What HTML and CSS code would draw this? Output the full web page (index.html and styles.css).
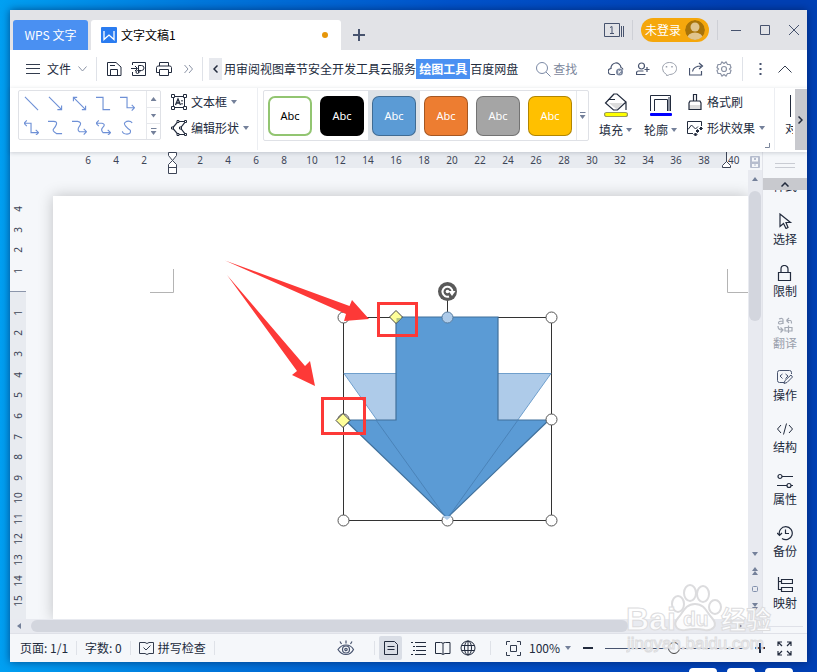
FILE: index.html
```html
<!DOCTYPE html>
<html lang="zh-CN">
<head>
    <meta charset="UTF-8">
    <meta name="viewport" content="width=device-width, initial-scale=1.0">
    <title>文字文稿1 - WPS 文字</title>
    <link rel="stylesheet" href="styles.css">
</head>
<body>
<div class="window">
    <header class="titlebar">
        <button class="home-tab">WPS 文字</button>
        <div class="doc-tab">
            <svg width="16" height="16"><rect width="16" height="16" rx="1" fill="#2b7cf0"/><path d="M3 4v8.500l5-4.500 5 4.500v-8.500" fill="none" stroke="#fff" stroke-width="1.300"/></svg>
            <span>文字文稿1</span>
            <i class="unsaved"></i>
        </div>
        <button class="new-tab" aria-label="新建"><svg width="12" height="12"><path d="M6 0v12M0 6h12" stroke="#47536e" stroke-width="2"/></svg></button>
        <div class="window-tools">
            <button aria-label="窗口列表"><svg width="20" height="14" fill="none" stroke="#47536e"><path d="M.5.500h15v13H.5zM17.500 3v11M19.500 3v11M6 4.500l2-1V10.500M6 10.500h4"/></svg></button>
            <i class="sep"></i>
            <button class="login">未登录
                <svg width="20" height="20"><defs><clipPath id="face"><circle cx="10" cy="10" r="10"/></clipPath></defs><g clip-path="url(#face)"><circle cx="10" cy="10" r="10" fill="#a87308"/><circle cx="10" cy="7" r="4.500" fill="#e0c48e"/><ellipse cx="10" cy="18.500" rx="8" ry="6" fill="#e0c48e"/></g></svg>
            </button>
            <i class="sep"></i>
            <button class="win" aria-label="最小化"><svg width="10" height="10"><path d="M0 5.500h10" stroke="#47536e"/></svg></button>
            <button class="win" aria-label="最大化"><svg width="10" height="10"><path d="M.5.500h9v9h-9z" fill="none" stroke="#47536e"/></svg></button>
            <button class="win" aria-label="关闭"><svg width="10" height="10"><path d="M0 0l10 10M10 0L0 10" stroke="#47536e"/></svg></button>
        </div>
    </header>

    <div class="menubar">
        <button class="file-menu">
            <svg width="14" height="12" stroke="#333c4e"><path d="M0 1.500h14M0 5.500h14M0 10.500h14"/></svg>
            文件
            <svg width="9" height="6" fill="none" stroke="#8b93a5"><path d="M.5.500l4 4.500 4-4.500"/></svg>
        </button>
        <i class="sep"></i>
        <div class="quick">
            <button aria-label="保存"><svg width="16" height="16" fill="none" stroke="#222b3d"><path d="M1.500 14.500V1.500h8.500l5 4.500v8.500zM4.500 14.500v-6h7v6M4 4.500h5"/></svg></button>
            <button aria-label="输出为PDF"><svg width="16" height="16" fill="none" stroke="#222b3d"><path d="M1.500 4V1.500h13v13h-13V11M0 7.500h6M4 5L6.500 7.500 4 10M7.500 12V4.500h3a2.500 2.500 0 0 1 0 5H6.500a1.500 1.500 0 0 0 0 3q2-.5 3-3"/></svg></button>
            <button aria-label="打印"><svg width="16" height="16" fill="none" stroke="#222b3d"><path d="M3.500 5V1.500h9V5M3.500 11.500h-3V6.500l1-1.500h13l1 1.500v5h-3M3.500 8.500h9v6h-9z"/></svg></button>
            <button aria-label="更多"><svg width="9" height="8" fill="none" stroke="#8b93a5"><path d="M.5 0l3.500 4-3.500 4M5 0l3.500 4L5 8"/></svg></button>
        </div>
        <i class="sep"></i>
        <button class="scroll-left" aria-label="向左"><svg width="5" height="8" fill="none" stroke="#222b3d" stroke-width="1.500"><path d="M4.500.500L1 4l3.500 3.500"/></svg></button>
        <nav class="tabs">
            <a href="#">用</a><a href="#">审阅</a><a href="#">视图</a><a href="#">章节</a><a href="#">安全</a><a href="#">开发工具</a><a href="#">云服务</a><a href="#" class="active">绘图工具</a><a href="#">百度网盘</a>
        </nav>
        <button class="search"><svg width="15" height="15" fill="none" stroke="#7c8aa6"><circle cx="6" cy="6" r="5.500"/><path d="M10 10l4.500 4.500"/></svg>查找</button>
        <div class="menu-tools">
            <button aria-label="云同步"><svg width="16" height="14" fill="none" stroke="#47536e" stroke-width="1.200"><path d="M7 12.500H3.500a3 3 0 0 1-.5-6 5 5 0 0 1 10-1 3 3 0 0 1 2 2"/><circle cx="11.500" cy="10" r="3.500" fill="#7d89a0" stroke="none"/><path d="M10.200 8.700l2.600 2.600M12.800 8.700l-2.600 2.600" stroke="#fff"/></svg></button>
            <button aria-label="协作"><svg width="14" height="14" fill="none" stroke="#47536e" stroke-width="1.200"><circle cx="5.500" cy="4" r="3"/><path d="M9.500 12.500h-9V11q0-2 2-2h5M8.500 7.500h5M11 5v5"/></svg></button>
            <button aria-label="反馈"><svg width="15" height="14" fill="none" stroke="#9aa0ac"><path d="M4.500 12.500Q.5 10.500.5 6.500C.5 3 3.500.500 7.500.500s7 2.500 7 6-3 6-7 6q-1 1-3 1z"/><path d="M4.500 4v1.500M10 4v1.500" stroke-width="1.500"/></svg></button>
            <button aria-label="分享"><svg width="15" height="14" fill="none" stroke="#47536e" stroke-width="1.200"><path d="M.5 6v7h12V9M3.500 9.500q1-5.500 9-5.500M10 1l3.500 3L10 7"/></svg></button>
            <button aria-label="设置"><svg width="16" height="16" fill="none" stroke="#8b93a5" stroke-width="1.200"><path d="M6 1l2 1.500L10 1l1.500 2.500H14l1 3L13.500 8 15 9.500l-1 3h-2.500L10 15l-2-1.500L6 15l-1.500-2.500H2l-1-3L2.500 8 1 6.500l1-3h2.500z"/><circle cx="8" cy="8" r="2.500"/></svg></button>
            <i class="sep"></i>
            <button aria-label="更多选项"><svg width="3" height="12" fill="#47536e"><path d="M.5 0h2v2h-2zM.5 5h2v2h-2zM.5 10h2v2h-2z"/></svg></button>
            <button class="fold" aria-label="收起功能区"><svg width="14" height="8" fill="none" stroke="#333c4e"><path d="M.5 7.500L7 1l6.500 6.500"/></svg></button>
        </div>
    </div>

    <div class="ribbon">
        <div class="shape-gallery">
            <div class="shapes">
                <button aria-label="直线"><svg viewBox="0 0 16 16"><path d="M1 1l14 14"/></svg></button>
                <button aria-label="箭头"><svg viewBox="0 0 16 16"><path d="M1 1l13 13M14.500 10v4.500H10"/></svg></button>
                <button aria-label="双箭头"><svg viewBox="0 0 16 16"><path d="M1.500 1.500l13 13M14.500 10.500v4h-4M1.500 5.500v-4h4"/></svg></button>
                <button aria-label="肘形连接符"><svg viewBox="0 0 16 16"><path d="M0 1.500h7.500v13H15"/></svg></button>
                <button aria-label="肘形箭头"><svg viewBox="0 0 16 16"><path d="M0 1.500h7.500v11H15M12.500 9.500l3 3-3 3"/></svg></button>
                <button aria-label="肘形双箭头"><svg viewBox="0 0 16 16"><path d="M.5 3.500h7v10H15M12.500 10.500l3 3-3 3M3 .5l-3 3 3 3"/></svg></button>
                <button aria-label="曲线连接符"><svg viewBox="0 0 16 16"><path d="M0 1.500h6q4 0 3 3t-3 5 3 5h6"/></svg></button>
                <button aria-label="曲线箭头"><svg viewBox="0 0 16 16"><path d="M0 1.500h6q5 1 2 5t0 6h7M12.500 9.500l3 3-3 3"/></svg></button>
                <button aria-label="曲线双箭头"><svg viewBox="0 0 16 16"><path d="M.5 3.500h6q4 1 1 4t0 6H15M12.500 10.500l3 3-3 3M3 .5l-3 3 3 3"/></svg></button>
                <button aria-label="曲线"><svg viewBox="0 0 16 16"><path d="M13 3Q11 .5 7 1.500 3 3 6 6.500t5 4.500q1 4-3.500 4T2.500 12"/></svg></button>
            </div>
            <div class="spin">
                <button aria-label="上一行"><i class="up"></i></button>
                <button aria-label="下一行"><i class="down"></i></button>
                <button aria-label="展开"><i class="down bar"></i></button>
            </div>
        </div>

        <div class="tool-stack">
            <button><svg width="16" height="16" fill="none" stroke="#222b3d"><path d="M2.500 1v14M13.500 1v14M1 2.500h14M1 13.500h14"/><path d="M.5.500h3v3h-3zM12.500.500h3v3h-3zM.5 12.500h3v3h-3zM12.500 12.500h3v3h-3z" fill="#fff"/><path d="M4.500 11L7 5l2.500 6M5.500 9h3M11 6v1.500M11 9v1.500" stroke-width="1.300"/></svg>文本框<i class="down"></i></button>
            <button><svg width="16" height="16" fill="none" stroke="#222b3d" stroke-width="1.200"><path d="M1.500 8L7 1.500h7.500L9.500 8l5 6.500H7z"/><path d="M.5 7h2v2h-2zM6 .5h2v2H6zM13.500.500h2v2h-2zM8.500 7h2v2h-2zM6 13.500h2v2H6zM13.500 13.500h2v2h-2z" fill="#fff" stroke-width="1"/></svg>编辑形状<i class="down"></i></button>
        </div>
        <i class="sep"></i>

        <div class="style-gallery">
            <button class="swatch white"><span>Abc</span></button>
            <button class="swatch black"><span>Abc</span></button>
            <button class="swatch blue selected"><span>Abc</span></button>
            <button class="swatch orange"><span>Abc</span></button>
            <button class="swatch gray"><span>Abc</span></button>
            <button class="swatch gold"><span>Abc</span></button>
            <button class="more" aria-label="更多样式"><i class="down bar"></i></button>
        </div>

        <div class="paint">
            <button><svg width="24" height="24" fill="none" stroke="#222b3d" stroke-width="1.200"><path d="M5 10h14l-6 6.500z" fill="#dcdcdc" stroke="none"/><path d="M10 1L1.500 10l8 7h4L22 9 13 1z M4 6.500h7M22 9v8"/><rect x=".5" y="19.500" width="23" height="4" rx="2" fill="#ffff00" stroke="#99995e"/></svg><span>填充<i class="down"></i></span></button>
            <button><svg width="24" height="24" fill="none" stroke="#222b3d"><path d="M1.500 18V2.500h20V18" /><path d="M5.500 18V6.500h13V18"/><path d="M20 4v14" stroke="#8d939f" stroke-width="2"/><rect x="1" y="20" width="22" height="3" rx="1" fill="#0000ff" stroke="none"/></svg><span>轮廓<i class="down"></i></span></button>
        </div>

        <div class="tool-stack effects">
            <button><svg width="16" height="16" fill="none" stroke="#222b3d" stroke-width="1.200"><path d="M2 11h12v4.500H2z" fill="#ddd" stroke="none"/><path d="M6.500 7V.500h3V7M3 7h10l1 2v6.500H2V9z"/></svg>格式刷</button>
            <button><svg width="16" height="16" fill="none" stroke="#222b3d"><path d="M6 13.500H.5V1.500h14V6M1 9.500L4.500 5l4 4L11 6.500"/><path d="M9 11l1.500-1.500L12 11l-1.500 1.500zM12.500 8.500L14 7l1.500 1.500L14 10zM7 14.500L8.500 13l1.500 1.500L8.500 16z" fill="#222b3d"/></svg>形状效果<i class="down"></i></button>
        </div>
        <div class="launcher"><svg width="5" height="5" fill="none" stroke="#7c879c"><path d="M4.500 0v4.500H0"/></svg></div>
        <i class="sep"></i>
        <div class="align-group"><svg width="8" height="22"><path d="M5.500 0v22" stroke="#222b3d"/></svg><span>对齐</span></div>
        <button class="scroll-right" aria-label="向右"><svg width="5" height="8" fill="none" stroke="#222b3d" stroke-width="1.500"><path d="M.5.500L4 4 .5 7.500"/></svg></button>
    </div>

    <div class="workspace">
        <main class="editor">
            <div class="ruler-h">
                <span>6</span><span>4</span><span>2</span>
                <span class="marker"><svg width="10" height="22" fill="#fff" stroke="#3d4557"><path d="M.5.500h8v3l-4 5 4 4v9h-8v-9l4-4-4-5zM.5 15.500h8"/></svg></span>
                <span>2</span><span>4</span><span>6</span><span>8</span><span>10</span><span>12</span><span>14</span><span>16</span><span>18</span><span>20</span><span>22</span><span>24</span><span>26</span><span>28</span><span>30</span><span>32</span><span>34</span><span>36</span><span>38</span>
                <span class="last"><svg width="9" height="16" fill="#fff" stroke="#3d4557"><path d="M4.500 0v10M.5 15.500h8v-2l-4-4-4 4z"/></svg>40</span>
            </div>
            <div class="editor-body">
                <div class="ruler-v">
                    <span>4</span><span>3</span><span>2</span><span>1</span><span></span><span>1</span><span>2</span><span>3</span><span>4</span><span>5</span><span>6</span><span>7</span><span>8</span><span>9</span><span>10</span><span>11</span><span>12</span><span>13</span><span>14</span><span>15</span>
                </div>
                <div class="canvas">
                    <div class="page">
                        <svg width="695" height="424" viewBox="53 196 695 424">
                            <g fill="none" stroke="#b4b4b4"><path d="M150 292.500h23.500V269M748 292.500h-20.500V269"/></g>
                            <path d="M343.500 317.500h208v203h-208zM447.500 300v17" fill="none" stroke="#333"/>
                            <path d="M344 373.500h207L447 519z" fill="#aecbe9" stroke="#6f9fcc"/>
                            <g fill="#fff" stroke="#555">
                                <circle cx="343.500" cy="317.500" r="5.500"/><circle cx="551.500" cy="317.500" r="5.500"/>
                                <circle cx="343.500" cy="520.500" r="5.500"/><circle cx="447.500" cy="520.500" r="5.500"/><circle cx="551.500" cy="520.500" r="5.500"/>
                                <circle cx="343.500" cy="419.500" r="5.500"/>
                            </g>
                            <path d="M396 317h102v103h51L447 518 345 420h51z" fill="#5b9bd5" stroke="#41719c" stroke-width="1.200"/>
                            <path d="M376 420L447 519l71-99" fill="none" stroke="#4b83b8"/>
                            <circle cx="551.500" cy="419.500" r="5.500" fill="#fff" stroke="#555"/>
                            <circle cx="447.500" cy="317.500" r="5.500" fill="#aecbe9" stroke="#567ca0"/>
                            <path d="M442 516l5 4 5-4" fill="#aecbe9"/>
                            <path d="M396 310.500l6.500 6.500-6.500 6.500-6.500-6.500zM343 413.500l7 7-7 7-7-7z" fill="#ffff99" stroke="#444"/>
                            <path d="M396.500 322.500V318h5z" fill="#b5c982"/>
                            <circle cx="447.500" cy="291.500" r="9.500" fill="#595959"/>
                            <path d="M449 296.500a5 5 0 1 1 3.500-5" fill="none" stroke="#fff" stroke-width="2"/>
                            <path d="M448.500 291h7l-3.500 5z" fill="#fff"/><circle cx="447.500" cy="291.500" r="1.800" fill="#fff"/>
                            <g fill="none" stroke="#fd3937" stroke-width="3"><path d="M378.500 303.500h38v32h-38zM322.500 398.500h42v35h-42z"/></g>
                            <path d="M225 260.500L349.500 306l2.500-6 17 19-25 2 2-7zM227 275l78 91 5-5 5 25-23-11 5-4z" fill="#fd3937"/>
                        </svg>
                    </div>
                </div>
            </div>
            <div class="scroll-h"><i class="left"></i><div class="thumb"></div><i class="right"></i></div>
        </main>

        <div class="scroll-v">
            <button aria-label="标尺"><svg width="10" height="12"><rect width="10" height="12" rx="1" fill="#b6bdce"/><path d="M2 1.500h6v4H2zM2 8h6v3H2z" fill="#f5f7fa"/><path d="M4 2h2v2H4zM4.500 8h1v2h-1z" fill="#b6bdce"/></svg></button>
            <i class="up"></i>
            <div class="thumb"></div>
            <div class="jump">
                <i class="down"></i>
                <span><i class="up"></i><i class="up"></i></span>
                <svg width="6" height="6"><rect x=".5" y=".5" width="5" height="5" rx="1" fill="none" stroke="#8290ad"/></svg>
                <span><i class="down"></i><i class="down"></i></span>
            </div>
        </div>

        <aside class="side">
            <div class="grip"></div>
            <button class="side-up" aria-label="向上"><svg width="8" height="5" fill="none" stroke="#222b3d" stroke-width="1.500"><path d="M.5 4.500L4 1l3.500 3.500"/></svg></button>
            <div class="side-cut"><span>样式</span></div>
            <button><svg width="16" height="16" fill="none" stroke="#222b3d" stroke-width="1.200"><path d="M3 1v12.500l3.500-3L9 15.500l2-1-2-5h4.500z"/></svg>选择</button>
            <button><svg width="16" height="16" fill="none" stroke="#222b3d" stroke-width="1.200"><path d="M1.500 7.500h12v8h-12zM4 7.500V4a3.500 3.500 0 0 1 7 0v3.500"/></svg>限制</button>
            <button class="off"><svg width="16" height="16" fill="none" stroke="#a3a9b4" stroke-width="1.200"><path d="M2 2q4-1.500 4 1v4M6 4Q1 4 1.500 6t4.500 0M9.500 3.500L12 1M9.500 3.500L12 6M10 3.500h3.500q1 0 1 3M1 9q0 4 4 4M3.500 10.500L6 13l-2.500 2.500M8 10.500h7V14H8zM11.500 8.500V16"/></svg>翻译</button>
            <button><svg width="16" height="16" fill="none" stroke="#47536e"><path d="M7 13.500H2.500q-2 0-2-2v-8q0-2 2-2h10q2 0 2 2V5M5.500 5L3 7l2.500 2.500M8.500 5L11 7 8.500 9.500M7 14.500l1-3L14 6l1.500 2L10 13.500z"/></svg>操作</button>
            <button><svg width="16" height="16" fill="none" stroke="#222b3d"><path d="M4 4L.5 8 4 12M12 4l3.500 4-3.500 4M9.500 2.500l-3 11"/></svg>结构</button>
            <button><svg width="16" height="16" fill="none" stroke="#222b3d" stroke-width="1.200"><circle cx="3" cy="3.500" r="2"/><circle cx="12" cy="12.500" r="2"/><path d="M5 3.500h11M0 12.500h10M14 12.500h2"/></svg>属性</button>
            <button><svg width="16" height="16" fill="none" stroke="#222b3d" stroke-width="1.200"><path d="M2.500 10a6.500 6.500 0 1 1 2.500 3.500M0 8l2.500 2.500L5 8M8.500 4.500v4H12"/></svg>备份</button>
            <button><svg width="16" height="16" fill="none" stroke="#222b3d" stroke-width="1.200"><path d="M1.500 0v12.500h3M1.500 4.500h3M4.500 2.500h11v4h-11zM4.500 10.500h11v4h-11z"/></svg>映射</button>
            <div class="side-end"></div>
        </aside>
    </div>

    <footer class="statusbar">
        <span>页面: 1/1</span>
        <i class="sep"></i>
        <span>字数: 0</span>
        <i class="sep"></i>
        <button class="spell"><svg width="16" height="14" fill="none" stroke="#333c4e"><path d="M6 1.500H.5v11H6l2 1 2-1h4.500v-11H10l-2 1zM4.500 6.500L7 9l4.500-4.500"/></svg>拼写检查</button>
        <i class="sep"></i>
        <button class="eye" aria-label="护眼模式"><svg width="18" height="16" fill="none" stroke="#47536e" stroke-width="1.200"><path d="M1 9.500Q4 5 9 5t7.500 4.500Q14 14.500 9 14.500T1 9.500z"/><circle cx="9" cy="9.500" r="3.500"/><circle cx="9" cy="9.500" r="1.200"/><path d="M9 .5v3M3 1.500l1.500 2.500M15 1.500L13.500 4"/></svg></button>
        <i class="sep"></i>
        <div class="views">
            <button class="current" aria-label="页面视图"><svg width="14" height="16" fill="none" stroke="#222b3d"><path d="M.5 1.500h10l3 3v10H.5zM3.500 6.500h7M3.500 9.500h7"/></svg></button>
            <button aria-label="大纲"><svg width="15" height="13" stroke="#222b3d"><path d="M4 .5h11M5 4.500h10M5 8.500h10M4 12.500h11M0 .5h2M2 4.500h2M2 8.500h2M0 12.500h2"/></svg></button>
            <button aria-label="阅读版式"><svg width="16" height="14" fill="none" stroke="#222b3d"><path d="M.5 1.500h5q2 0 2.500 1 .5-1 2.500-1h4.500v11h-5L8 13.500l-2-1H.5zM8 2v11"/></svg></button>
            <button aria-label="Web版式"><svg width="16" height="16" fill="none" stroke="#222b3d"><circle cx="8" cy="8" r="7"/><ellipse cx="8" cy="8" rx="3.500" ry="7"/><path d="M8 1v14M1.500 5.500h13M1.500 10.500h13"/></svg></button>
        </div>
        <i class="sep"></i>
        <div class="zoom">
            <svg width="15" height="15" fill="none" stroke="#333c4e"><path d="M4.500 4.500h6v6h-6zM.5 4V.5H4M11 .5h3.500V4M14.500 11v3.500H11M4 14.500H.5V11"/></svg>
            <select aria-label="显示比例"><option>100%</option></select><i class="down"></i>
            <button aria-label="缩小"><svg width="10" height="10"><path d="M0 5h10" stroke="#222b3d" stroke-width="2"/></svg></button>
            <input type="range" min="0" max="100" value="50" aria-label="缩放">
            <button aria-label="放大"><svg width="10" height="10"><path d="M0 5h10M5 0v10" stroke="#222b3d" stroke-width="2"/></svg></button>
            <button class="full" aria-label="全屏"><svg width="15" height="15" fill="none" stroke="#222b3d" stroke-width="1.200"><path d="M1 5V1h4M1 1l4 4M10 1h4v4M14 1l-4 4M14 10v4h-4M14 14l-4-4M5 14H1v-4M1 14l4-4"/></svg></button>
        </div>
    </footer>
</div>

<div class="watermark">
    <svg width="150" height="76">
        <g fill="#fff" fill-opacity=".85" stroke="#dcdcde" stroke-width="2">
            <ellipse cx="52" cy="22" rx="6" ry="8"/><ellipse cx="64" cy="11" rx="6" ry="8"/><ellipse cx="77" cy="12" rx="6" ry="8"/><ellipse cx="89" cy="25" rx="6" ry="7"/>
            <path d="M69 22c10 0 12 9 17 14 7 8 0 13-7 12q-10-2-20 0c-8 1-13-5-7-12 5-5 7-14 17-14z"/>
        </g>
        <text class="mark-big" x="0" y="48">Bai</text>
        <text class="mark-du" x="57" y="44">du</text>
        <text class="mark-cn" x="95" y="47">经验</text>
        <text class="mark-url" x="1" y="67">jingyan.baidu.com</text>
    </svg>
</div>
<div class="dock"><i></i><i></i><i></i></div>
</body>
</html>
```
FILE: styles.css
```css
* {
    box-sizing: border-box;
}

body {
    margin: 0;
    padding: 10px;
    height: 100vh;
    overflow: hidden;
    position: relative;
    font-family: "Noto Sans CJK SC", "Noto Sans", sans-serif;
    font-size: 12px;
    line-height: 18px;
    color: #222b3d;
    background: linear-gradient(to right, #00a0f2 0, #0078dc 200px, #0053cb 55%, #0040b4 90%);
}

button {
    display: flex;
    align-items: center;
    justify-content: center;
    padding: 0;
    border: 0;
    background: none;
    font: inherit;
    color: inherit;
    white-space: nowrap;
}

svg {
    display: block;
    flex-shrink: 0;
}

a {
    color: inherit;
    text-decoration: none;
}

.window {
    height: 100%;
    display: flex;
    flex-direction: column;
    background: #f5f7fa;
    box-shadow: 0 0 8px rgba(0, 20, 70, 0.6);
}

.sep {
    width: 1px;
    height: 24px;
    background: #dfe2e8;
    flex-shrink: 0;
}

/* 小三角 */
.up, .down, .left, .right {
    display: block;
    width: 6px;
    height: 4px;
    background: #74809a;
    flex-shrink: 0;
}

.down {
    clip-path: polygon(0 0, 100% 0, 50% 100%);
}

.up {
    clip-path: polygon(0 100%, 50% 0, 100% 100%);
}

.left, .right {
    width: 4px;
    height: 6px;
}

.left {
    clip-path: polygon(100% 0, 100% 100%, 0 50%);
}

.right {
    clip-path: polygon(0 0, 100% 50%, 0 100%);
}

.bar {
    height: 7px;
    clip-path: polygon(0 0, 100% 0, 100% 1px, 0 1px, 0 3px, 100% 3px, 50% 100%, 0 3px);
}

/* 标题栏 */
.titlebar {
    height: 40px;
    flex-shrink: 0;
    display: flex;
    align-items: flex-end;
    background: #e2e3e7;
    padding-left: 3px;
}

.home-tab {
    width: 75px;
    height: 30px;
    border-radius: 3px 3px 0 0;
    background: #4a90f2;
    color: #fff;
}

.doc-tab {
    width: 250px;
    height: 30px;
    margin-left: 3px;
    padding: 0 13px 0 10px;
    display: flex;
    align-items: center;
    gap: 4px;
    background: #fff;
    border-radius: 3px 3px 0 0;
    color: #000;
}

.unsaved {
    width: 6px;
    height: 6px;
    margin-left: auto;
    border-radius: 50%;
    background: #e6960a;
}

.new-tab {
    width: 36px;
    height: 30px;
}

.window-tools {
    height: 40px;
    margin-left: auto;
    padding-right: 8px;
    display: flex;
    align-items: center;
    gap: 8px;
}

.window-tools .sep {
    height: 20px;
    background: #ced0d6;
}

.login {
    width: 68px;
    height: 24px;
    gap: 4px;
    border-radius: 12px;
    background: #f5a70c;
    color: #fff;
}

.win {
    width: 10px;
    margin: 0 6px 0 5px;
}

.win:last-child {
    margin-right: 0;
}

/* 菜单栏 */
.menubar {
    height: 38px;
    flex-shrink: 0;
    display: flex;
    align-items: center;
    background: #fff;
    padding-left: 16px;
}

.file-menu {
    gap: 7px;
    margin-right: 9px;
}

.quick {
    display: flex;
    align-items: center;
    gap: 9px;
    padding: 0 9px;
}

.quick button:last-child {
    margin-left: 3px;
}

.scroll-left {
    width: 13px;
    height: 22px;
    margin: 0 2px 0 6px;
    background: #e7e9ee;
}

.tabs {
    display: flex;
    white-space: nowrap;
    line-height: 20px;
}

.tabs .active {
    background: #4a90f2;
    color: #fff;
    font-weight: bold;
    padding: 0 3px;
}

.search {
    gap: 2px;
    margin-left: 18px;
    color: #7c879c;
}

.menu-tools {
    margin-left: auto;
    padding-right: 15px;
    display: flex;
    align-items: center;
    gap: 12px;
}

.menu-tools .sep {
    margin-right: 4px;
    margin-left: -2px;
}

.menu-tools .fold {
    margin-left: 4px;
}

/* 功能区 */
.ribbon {
    height: 64px;
    flex-shrink: 0;
    display: flex;
    align-items: flex-start;
    background: #fff;
    padding-left: 8px;
    box-shadow: 0 1px 4px rgba(40, 50, 70, 0.2);
    position: relative;
    overflow: hidden;
}

.ribbon > .sep {
    height: 62px;
    background: #eceef2;
}

.shape-gallery {
    height: 50px;
    margin-top: 2px;
    display: flex;
    border: 1px solid #dfe1e6;
    border-radius: 2px;
}

.shapes {
    display: grid;
    grid-template-columns: repeat(5, 24px);
    grid-template-rows: repeat(2, 24px);
    width: 127px;
}

.shapes svg {
    width: 15px;
    height: 15px;
    fill: none;
    stroke: #6e90d6;
    stroke-width: 1.2;
}

.spin {
    width: 14px;
    display: grid;
    grid-template-rows: 1fr 1fr 1fr;
    border-left: 1px solid #e6e8ec;
}

.spin button + button {
    border-top: 1px solid #e6e8ec;
}

.tool-stack {
    display: flex;
    flex-direction: column;
    gap: 8px;
    margin: 5px 8px 0 10px;
}

.tool-stack button {
    justify-content: flex-start;
    gap: 4px;
    height: 18px;
}

.style-gallery {
    height: 51px;
    margin: 2px 10px 0 5px;
    display: flex;
    border: 1px solid #dfe1e6;
    border-radius: 2px;
}

.swatch {
    width: 52px;
    height: 49px;
    font-family: "Noto Sans", sans-serif;
    font-size: 11px;
    color: #fff;
}

.swatch span {
    width: 44px;
    height: 40px;
    line-height: 37px;
    border-radius: 7px;
    border: 1px solid rgba(0, 0, 0, 0.3);
}

.selected {
    background: #dde2e7;
}

.white span {
    border: 2px solid #92c571;
    line-height: 35px;
    color: #000;
}

.black span {
    background: #000;
}

.blue span {
    background: #5b9bd5;
}

.orange span {
    background: #ed7d31;
}

.gray span {
    background: #a5a5a5;
}

.gold span {
    background: #ffc000;
}

.more {
    width: 12px;
    border-left: 1px solid #e6e8ec;
}

.paint {
    display: flex;
    gap: 12px;
    margin-top: 5px;
}

.paint button {
    width: 33px;
    flex-direction: column;
    gap: 4px;
}

.paint span {
    display: flex;
    align-items: center;
    gap: 3px;
}

.effects {
    margin: 5px 0 0 10px;
}

.launcher {
    align-self: flex-end;
    padding-bottom: 4px;
    margin-right: 4px;
}

.align-group {
    width: 20px;
    margin-top: 7px;
    padding-left: 10px;
    overflow: hidden;
    white-space: nowrap;
}

.align-group span {
    display: block;
    margin-top: 2px;
    width: 8px;
    overflow: hidden;
}

.scroll-right {
    width: 13px;
    height: 61px;
    margin: 1px 0 0 auto;
    background: #c8c9ce;
}

/* 编辑区 */
.workspace {
    flex: 1;
    min-height: 0;
    display: flex;
}

.editor {
    flex: 1;
    min-width: 0;
    display: flex;
    flex-direction: column;
}

.ruler-h {
    height: 16px;
    flex-shrink: 0;
    display: grid;
    grid-template-columns: repeat(24, 28px);
    padding-left: 64px;
    font-family: "Noto Sans", sans-serif;
    font-size: 10px;
    line-height: 16px;
    text-align: center;
    color: #3d4557;
    background: linear-gradient(to right, transparent 162px, #e8ebf0 162px, #e8ebf0 717px, transparent 717px);
}

.marker {
    padding-left: 10px;
    position: relative;
    z-index: 1;
}

.last {
    display: flex;
    margin-left: 4px;
}

.last svg {
    margin-right: -3px;
}

.editor-body {
    flex: 1;
    min-height: 0;
    display: flex;
}

.ruler-v {
    width: 16px;
    padding: 30px 0 7px;
    display: grid;
    grid-auto-rows: 1fr;
    font-family: "Noto Sans", sans-serif;
    font-size: 10px;
    line-height: 16px;
    text-align: center;
    color: #3d4557;
    background: linear-gradient(transparent 123px, #8b95aa 123px, #8b95aa 124px, #e8ebf0 124px);
}

.ruler-v span {
    writing-mode: vertical-rl;
    transform: rotate(180deg);
}

.canvas {
    flex: 1;
    min-width: 0;
    padding: 28px 0 0 27px;
    overflow: hidden;
}

.page {
    height: 100%;
    overflow: hidden;
    background: #fff;
    box-shadow: 0 0 14px rgba(0, 0, 0, 0.22);
}

.scroll-h {
    height: 14px;
    flex-shrink: 0;
    display: flex;
    align-items: center;
    padding: 0 6px 0 7px;
    background: #e8eaf0;
}

.scroll-h .thumb {
    flex: 1;
    height: 12px;
    margin: 0 110px 0 10px;
    border-radius: 6px;
    background: #d3d6de;
}

.scroll-v {
    width: 15px;
    display: flex;
    flex-direction: column;
    align-items: center;
    padding-top: 4px;
    border-right: 1px solid #e2e4ea;
    background: linear-gradient(#f5f7fa 18px, #e8eaf0 18px);
}

.scroll-v > .up {
    margin: 9px 0 10px;
}

.scroll-v .thumb {
    width: 12px;
    height: 130px;
    border-radius: 6px;
    background: #d3d6de;
}

.jump {
    margin-top: auto;
    padding-bottom: 22px;
    display: flex;
    flex-direction: column;
    align-items: center;
    gap: 11px;
}

.jump span {
    display: grid;
}

/* 右侧任务窗格 */
.side {
    width: 44px;
    padding-top: 11px;
    overflow: hidden;
}

.grip {
    height: 5px;
    margin: 0 12px 10px;
    border: solid #c9ccd3;
    border-width: 1px 0;
}

.side button {
    width: 44px;
    height: 52px;
    flex-direction: column;
    gap: 1px;
}

.side .side-up {
    height: 12px;
    background: #c8c9ce;
}

.side-cut {
    height: 14px;
    overflow: hidden;
    text-align: center;
}

.side-cut span {
    display: block;
    margin-top: -13px;
}

.side .off {
    color: #9aa0ac;
}

.side-end {
    margin: 6px 4px 0;
    border-top: 1px solid #dfe1e8;
}

/* 状态栏 */
.statusbar {
    height: 29px;
    flex-shrink: 0;
    display: flex;
    align-items: center;
    gap: 8px;
    padding: 0 15px 0 10px;
    border-top: 1px solid #dfe1e8;
    white-space: nowrap;
}

.statusbar .sep {
    height: 14px;
}

.spell {
    gap: 3px;
}

.eye {
    margin: 0 11px 0 auto;
}

.views {
    display: flex;
    align-items: center;
    gap: 9px;
    margin-left: -4px;
}

.views .current {
    width: 23px;
    height: 24px;
    border-radius: 2px;
    background: #dadee6;
}

.views + .sep {
    margin-left: 6px;
}

.zoom {
    display: flex;
    align-items: center;
    margin-left: 7px;
}

.zoom select {
    appearance: none;
    width: 36px;
    margin-left: 8px;
    padding: 0;
    border: 0;
    background: none;
    font: inherit;
    color: inherit;
}

.zoom button {
    margin: 0 12px;
}

.zoom .full {
    margin: 0;
}

.zoom input {
    appearance: none;
    width: 138px;
    height: 14px;
    margin: 0;
    background: linear-gradient(#47536e, #47536e) center / 100% 1px no-repeat;
}

.zoom input::-webkit-slider-thumb {
    appearance: none;
    width: 12px;
    height: 12px;
    border: 1px solid #444;
    border-radius: 50%;
    background: #f5f7fa;
}

/* 水印 */
.watermark {
    position: absolute;
    right: 41px;
    bottom: 14px;
    pointer-events: none;
}

.watermark text {
    font-family: "Liberation Sans", "Noto Sans CJK SC", sans-serif;
    font-weight: bold;
    fill: rgba(255, 255, 255, 0.85);
    stroke: #dcdcde;
    stroke-width: 1px;
}

.watermark .mark-big {
    font-size: 32px;
}

.watermark .mark-du {
    font-size: 21px;
}

.watermark .mark-cn {
    font-size: 25px;
}

.watermark .mark-url {
    font-size: 17px;
    font-weight: normal;
    fill: rgba(255, 255, 255, 0.7);
}

.dock {
    position: absolute;
    right: 24px;
    bottom: 0;
    display: flex;
    gap: 10px;
}

.dock i {
    width: 28px;
    height: 4px;
    border-radius: 8px 8px 0 0;
    background: #fff;
}
```
